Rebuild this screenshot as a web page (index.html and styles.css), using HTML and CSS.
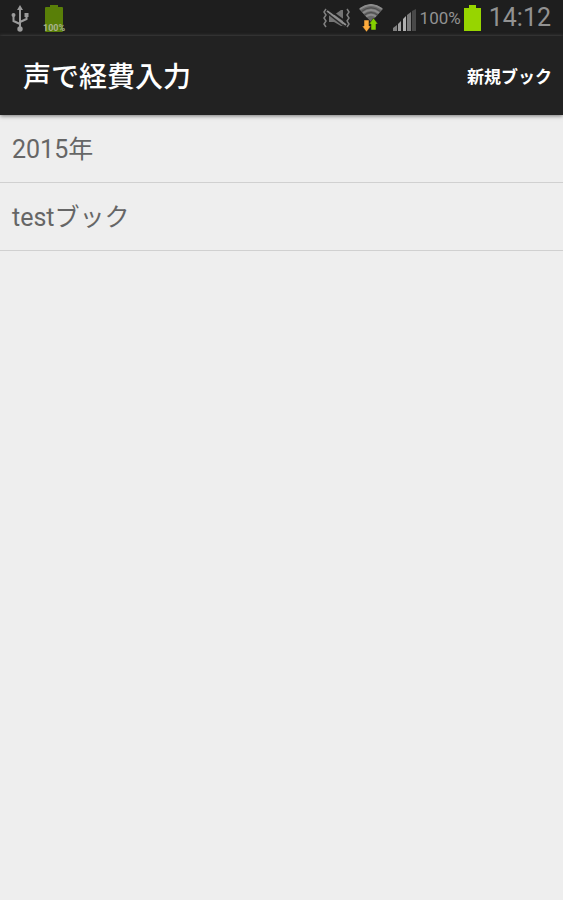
FILE: index.html
```html
<!DOCTYPE html>
<html lang="ja">
<head>
<meta charset="utf-8">
<meta name="viewport" content="width=device-width, initial-scale=1">
<title>声で経費入力</title>
<link rel="stylesheet" href="styles.css">
</head>
<body>
<div class="status-bar">
  <div class="status-group status-left">
    <svg class="icon" width="20" height="28" viewBox="0 0 20 28" fill="none" stroke="#9b9b9b" stroke-width="2" aria-hidden="true">
      <path d="M10 5v19M10 20L3.500 17V12M10 18l6.500-3V11"/>
      <path d="M10 1l3 5H7z" fill="#9b9b9b" stroke="none"/>
      <circle cx="10" cy="25" r="2.700" fill="#9b9b9b" stroke="none"/>
      <circle cx="3.500" cy="11" r="2" fill="#9b9b9b" stroke="none"/>
      <path d="M14.500 9h4v4h-4z" fill="#9b9b9b" stroke="none"/>
    </svg>
    <div class="charge">
      <svg class="icon" width="18" height="27" viewBox="0 0 18 27" aria-hidden="true">
        <path d="M5 0h8v2h4q1 0 1 1v23q0 1-1 1H1q-1 0-1-1V3q0-1 1-1h4z" fill="#597f08"/>
      </svg>
      <span class="charge-label">100%</span>
    </div>
  </div>
  <div class="status-group">
    <svg class="icon" width="27" height="20" viewBox="0 0 27 20" fill="none" stroke="#808080" stroke-width="1.500" aria-hidden="true">
      <path d="M3 1L1 4l2 3-2 3 2 3-2 3 2 3M24 1l2 3-2 3 2 3-2 3 2 3-2 3"/>
      <path d="M6 7h5l7-5h2v16h-2l-7-4H6z" fill="#747474" stroke="none"/>
      <path d="M5 1l18 13" stroke="#202020" stroke-width="2"/>
      <path d="M4 3l19 14" stroke="#909090" stroke-width="2"/>
      <path d="M4 5l18 14" stroke="#2a2a2a"/>
    </svg>
    <svg class="icon wifi" width="24" height="28" viewBox="0 0 24 28" aria-hidden="true">
      <path d="M0 5Q12-4 24 5L12 18z" fill="#686868"/>
      <path d="M1 5Q12-3 23 5M4 9Q12 3 20 9M7 12.500Q12 9 17 12.500" fill="none" stroke="#8c8c8c" stroke-width="2"/>
      <path d="M2.500 7.500Q12 0 21.500 7.500M5.500 11Q12 6 18.500 11" fill="none" stroke="#4c4c4c"/>
      <path d="M5 16h5v6h2l-4.500 6L3 22h2z" fill="#ffac3d" stroke="#1e1e1e" stroke-width=".5"/>
      <path d="M12 26v-6h-2l4.500-6 4.500 6h-2v6z" fill="#85d000" stroke="#1e1e1e" stroke-width=".5"/>
    </svg>
    <svg class="icon signal" width="23" height="22" viewBox="0 0 23 22" aria-hidden="true">
      <path d="M0 22v-3l4-3v6z" fill="#808080"/>
      <path d="M5 22V15l3-3v10z" fill="#a0a0a0"/>
      <path d="M10 22V10l3-3v15z" fill="#b0b0b0"/>
      <path d="M14 22V6l4-3v19z" fill="#7c7c7c"/>
      <path d="M19 22V2l4-2v22z" fill="#484848"/>
    </svg>
    <span class="percent">100%</span>
    <svg class="icon" width="17" height="26" viewBox="0 0 17 26" aria-hidden="true">
      <path d="M5 0h7v3h5v23H0V3h5z" fill="#97d500"/>
    </svg>
    <time class="clock">14:12</time>
  </div>
</div>
<header class="app-bar">
  <h1 class="title">声で経費入力</h1>
  <button class="action" type="button">新規ブック</button>
</header>
<main>
  <ul class="books">
    <li><a class="book" href="#">2015年</a></li>
    <li><a class="book" href="#">testブック</a></li>
  </ul>
</main>
</body>
</html>
```
FILE: styles.css
```css
* {
  box-sizing: border-box;
}

body {
  margin: 0;
  min-height: 100vh;
  background: #eee;
  font-family: Roboto, "Noto Sans CJK JP", sans-serif;
}

.status-bar {
  display: flex;
  justify-content: space-between;
  align-items: center;
  height: 36px;
  padding: 0 12px 0 10px;
  background: #1e1e1e;
  color: #929292;
}

.status-group {
  display: flex;
  align-items: center;
}

.status-left {
  gap: 15px;
}

.icon {
  display: block;
  flex: none;
}

.charge {
  position: relative;
}

.charge-label {
  position: absolute;
  left: -2px;
  bottom: 0;
  color: #a9b38f;
  font-size: 9px;
  font-weight: 700;
  line-height: 8px;
}

.wifi {
  margin-left: 9px;
}

.signal {
  margin: 3px 4px 0 10px;
}

.percent {
  margin-right: 3px;
  font-size: 17px;
}

.clock {
  margin-left: 8px;
  font-size: 25px;
  line-height: 36px;
}

.app-bar {
  display: flex;
  justify-content: space-between;
  align-items: center;
  height: 79px;
  padding: 0 11px 0 23px;
  background: #222;
  color: #fff;
  box-shadow: 0 1px 4px #777;
}

.title {
  margin: 0;
  padding-top: 4px;
  font-size: 28px;
  font-weight: 500;
  line-height: 40px;
}

.action {
  padding: 0;
  border: 0;
  background: none;
  color: #fff;
  font: inherit;
  font-size: 17px;
  font-weight: 700;
}

.books {
  margin: 0;
  padding: 0;
  list-style: none;
}

.book {
  display: block;
  padding: 17px 12px 14px;
  border-bottom: 1px solid #d0d0d0;
  color: #666;
  font-size: 25px;
  line-height: 36px;
  text-decoration: none;
}
```
